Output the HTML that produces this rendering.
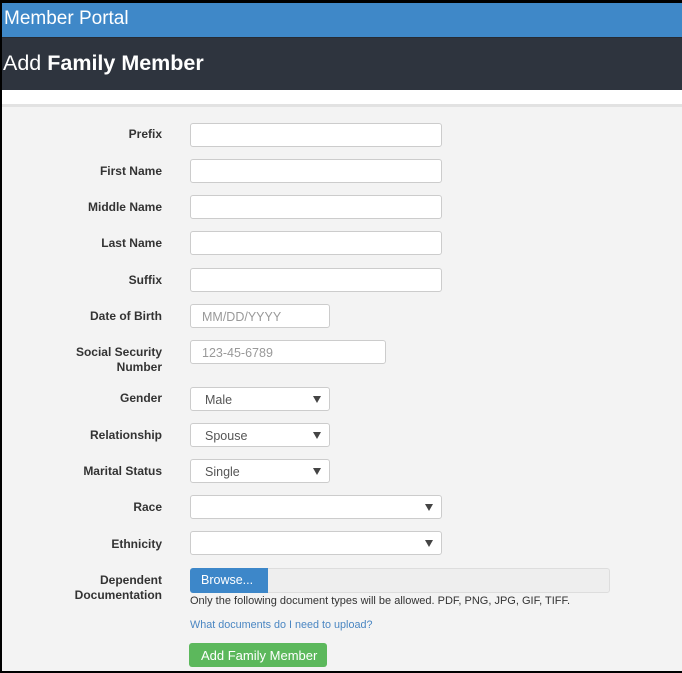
<!DOCTYPE html>
<html><head><style>
*{box-sizing:border-box;margin:0;padding:0}
body{width:682px;height:673px;background:#000;font-family:"Liberation Sans",sans-serif;position:relative;overflow:hidden}
.blue{position:absolute;left:2px;top:3px;right:0;height:34px;background:#3f88c8;color:#fff;font-size:19px;padding:5px 0 0 2px}
.dark{position:absolute;left:2px;top:37px;right:0;height:53px;background:#2e343e;color:#fff;font-size:21.5px;padding:13px 0 0 1px;border-top:1px solid #262b33}
.white{position:absolute;left:2px;top:90px;right:0;height:15px;background:#fff}
.panel{position:absolute;left:2px;top:104px;right:0;height:567px;background:#f3f3f3;border-top:3px solid #e2e2e2}
.l{position:absolute;right:520px;font-size:12px;font-weight:bold;color:#333;text-align:right;line-height:15px}
.i{position:absolute;left:190px;height:24px;background:#fff;border:1px solid #ccc;border-radius:3px;font-size:12.5px;color:#999;padding:5px 11px}
.s{color:#555;padding-left:14px}
.s:after{content:"";position:absolute;right:8px;top:8px;border-left:4px solid transparent;border-right:4px solid transparent;border-top:7px solid #444}
</style></head><body>
<div class="blue">Member Portal</div>
<div class="dark">Add <b>Family Member</b></div>
<div class="white"></div>
<div class="panel"></div>
<div class="l" style="top:127px">Prefix</div><div class="i" style="top:123px;width:252px"></div>
<div class="l" style="top:164px">First Name</div><div class="i" style="top:159px;width:252px"></div>
<div class="l" style="top:200px">Middle Name</div><div class="i" style="top:195px;width:252px"></div>
<div class="l" style="top:236px">Last Name</div><div class="i" style="top:231px;width:252px"></div>
<div class="l" style="top:273px">Suffix</div><div class="i" style="top:268px;width:252px"></div>
<div class="l" style="top:309px">Date of Birth</div><div class="i" style="top:304px;width:140px">MM/DD/YYYY</div>
<div class="l" style="top:345px">Social Security<br>Number</div><div class="i" style="top:340px;width:196px">123-45-6789</div>
<div class="l" style="top:391px">Gender</div><div class="i s" style="top:387px;width:140px">Male</div>
<div class="l" style="top:428px">Relationship</div><div class="i s" style="top:423px;width:140px">Spouse</div>
<div class="l" style="top:464px">Marital Status</div><div class="i s" style="top:459px;width:140px">Single</div>
<div class="l" style="top:500px">Race</div><div class="i s" style="top:495px;width:252px"></div>
<div class="l" style="top:537px">Ethnicity</div><div class="i s" style="top:531px;width:252px"></div>
<div class="l" style="top:573px">Dependent<br>Documentation</div>
<div style="position:absolute;left:190px;top:568px;width:420px;height:25px;background:#eee;border:1px solid #ddd;border-radius:3px"></div>
<div style="position:absolute;left:190px;top:568px;width:78px;height:25px;background:#3d87c9;color:#fff;font-size:12.5px;padding:5px 0 0 11px;border-radius:3px 0 0 3px">Browse...</div>
<div style="position:absolute;left:190px;top:595px;font-size:11px;color:#333">Only the following document types will be allowed. PDF, PNG, JPG, GIF, TIFF.</div>
<div style="position:absolute;left:190px;top:619px;font-size:10.8px;color:#4a86c2">What documents do I need to upload?</div>
<div style="position:absolute;left:189px;top:643px;width:138px;height:24px;background:#5cb85c;border-radius:3px;color:#fff;font-size:13px;padding:5px 0 0 12px">Add Family Member</div>
</body></html>
